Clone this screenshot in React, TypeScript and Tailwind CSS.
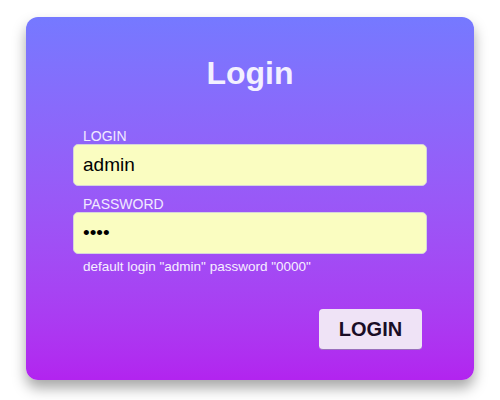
import React, { useState } from 'react';

const App: React.FC = () => {
  const [login, setLogin] = useState<string>('admin');
  const [password, setPassword] = useState<string>('0000');

  return (
    <div className="min-h-screen bg-white pt-[17px] pl-[26px] font-['Liberation_Sans',Arial,sans-serif]">
      <div className="w-[448px] h-[363px] rounded-[12px] bg-linear-to-b from-[#7579ff] to-[#b224ef] shadow-[0_8px_14px_rgba(0,0,0,0.35)] flex flex-col">
        <h1 className="pt-[40px] text-[32px] leading-[32px] font-bold text-center text-[#f3f0ff]">Login</h1>
        <form className="mt-[39px] px-[47px] flex flex-col" onSubmit={(e) => e.preventDefault()}>
          <label className="ml-[10px] text-[14px] leading-[16px] text-[#f1eaff]">LOGIN</label>
          <input
            type="text"
            value={login}
            onChange={(e) => setLogin(e.target.value)}
            className="h-[42px] w-full rounded-[5px] border border-[#d6d3dc] bg-[#fafdc1] pl-[9px] text-[19px] text-black outline-none"
          />
          <label className="mt-[10px] ml-[10px] text-[14px] leading-[16px] text-[#f1eaff]">PASSWORD</label>
          <input
            type="password"
            value={password}
            onChange={(e) => setPassword(e.target.value)}
            className="h-[42px] w-full rounded-[5px] border border-[#d6d3dc] bg-[#fafdc1] pl-[9px] text-[19px] text-black outline-none"
          />
          <p className="mt-[4px] ml-[10px] text-[13.5px] leading-[18px] text-[#f6efff]">
            default login "admin" password "0000"
          </p>
          <div className="mt-[33px] flex justify-end pr-[5px]">
            <button
              type="submit"
              className="h-[41px] w-[103px] rounded-[4px] bg-[#efe3f6] border-b border-[#9a6fbe] text-[20px] font-bold text-[#1a0d26]"
            >
              LOGIN
            </button>
          </div>
        </form>
      </div>
    </div>
  );
};

export default App;
